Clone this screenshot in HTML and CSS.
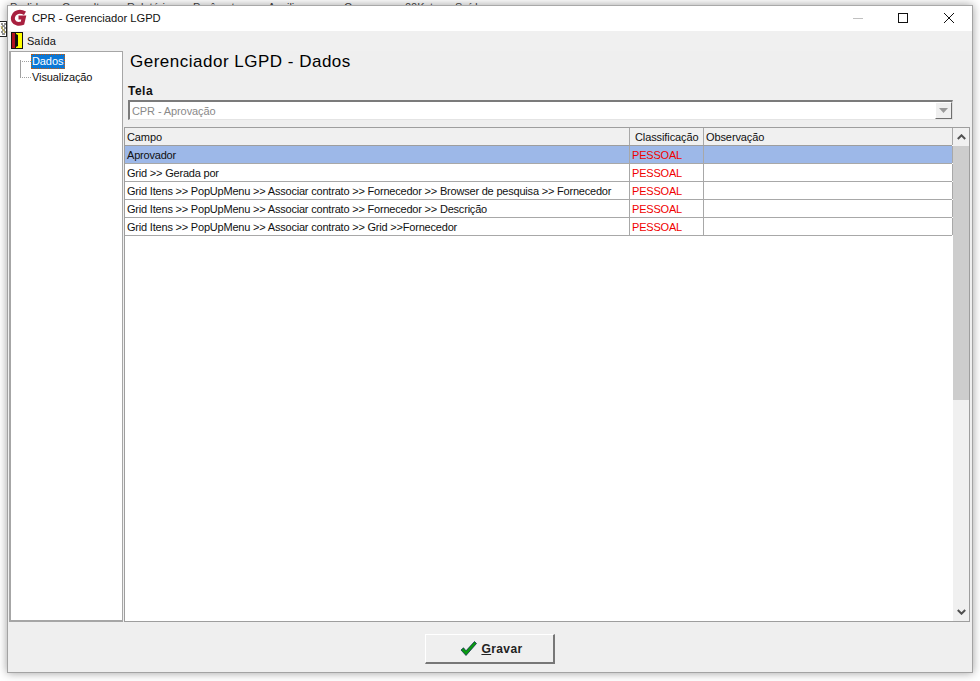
FILE: index.html
```html
<!DOCTYPE html>
<html lang="pt">
<head>
<meta charset="utf-8">
<title>CPR - Gerenciador LGPD</title>
<link rel="stylesheet" href="styles.css">
</head>
<body>
<nav class="behind-menu"><span class="m1">Pedidos</span><span class="m2">Consultas</span><span class="m3">Relatórios</span><span class="m4">Parâmetros</span><span class="m5">Auxiliares</span><span class="m6">Compras</span><span class="m7">00Kstore</span><span class="m8">Saída</span></nav>
<div class="window">
  <header class="titlebar">
    <svg class="logo" width="18" height="18" viewBox="0 0 18 18"><path d="M15 4.300C12 2.600 8.500 2.300 5.800 4 3 5.800 2.200 9.500 3.500 12c1.500 2.800 5.500 3.400 9 2.100l1.300-5.600H8.500" fill="none" stroke="#a8203f" stroke-width="4"/></svg>
    <span class="title">CPR - Gerenciador LGPD</span>
    <div class="controls">
      <span class="ctl min"></span>
      <span class="ctl max"></span>
      <svg class="ctl close" width="10" height="10" viewBox="0 0 10 10"><path d="M0 0l10 10M10 0L0 10" stroke="#111" fill="none"/></svg>
    </div>
  </header>
  <div class="menubar">
    <svg class="door" width="12" height="17" viewBox="0 0 12 17"><rect x="0" y="0" width="12" height="17" fill="#111"/><rect x="1" y="1" width="3" height="15" fill="#b01020"/><path d="M5 1h6v15H5z" fill="#ffff00"/><path d="M5 2l2 1v11l-2 1z" fill="#111"/></svg>
    <span class="menu-label">Saída</span>
  </div>
  <div class="content">
    <aside class="tree">
      <div class="tree-row"><span class="tree-branch first"></span><span class="node selected">Dados</span></div>
      <div class="tree-row"><span class="tree-branch"></span><span class="node">Visualização</span></div>
    </aside>
    <main class="main">
      <h1 class="heading">Gerenciador LGPD - Dados</h1>
      <label class="field-label">Tela</label>
      <div class="combo">
        <span class="combo-text">CPR - Aprovação</span>
        <span class="combo-btn"><svg width="9" height="5" viewBox="0 0 9 5"><path d="M0 0h9L4.500 5z" fill="#9a9a9a"/></svg></span>
      </div>
      <div class="grid-panel">
        <div class="grid">
          <div class="row head"><div class="c1">Campo</div><div class="c2">Classificação</div><div class="c3">Observação</div></div>
          <div class="row active"><div class="c1">Aprovador</div><div class="c2 red">PESSOAL</div><div class="c3"></div></div>
          <div class="row"><div class="c1">Grid &gt;&gt; Gerada por</div><div class="c2 red">PESSOAL</div><div class="c3"></div></div>
          <div class="row"><div class="c1">Grid Itens &gt;&gt; PopUpMenu &gt;&gt; Associar contrato &gt;&gt; Fornecedor &gt;&gt; Browser de pesquisa &gt;&gt; Fornecedor</div><div class="c2 red">PESSOAL</div><div class="c3"></div></div>
          <div class="row"><div class="c1">Grid Itens &gt;&gt; PopUpMenu &gt;&gt; Associar contrato &gt;&gt; Fornecedor &gt;&gt; Descrição</div><div class="c2 red">PESSOAL</div><div class="c3"></div></div>
          <div class="row"><div class="c1">Grid Itens &gt;&gt; PopUpMenu &gt;&gt; Associar contrato &gt;&gt; Grid &gt;&gt;Fornecedor</div><div class="c2 red">PESSOAL</div><div class="c3"></div></div>
        </div>
        <div class="scrollbar">
          <div class="arrow"><svg width="9" height="6" viewBox="0 0 9 6"><path d="M.800 5L4.500 1.300 8.200 5" stroke="#505050" stroke-width="2" fill="none"/></svg></div>
          <div class="thumb"></div>
          <div class="track"></div>
          <div class="arrow"><svg width="9" height="6" viewBox="0 0 9 6"><path d="M.800 1L4.500 4.700 8.200 1" stroke="#505050" stroke-width="2" fill="none"/></svg></div>
        </div>
      </div>
    </main>
  </div>
  <footer class="footer">
    <button class="btn" type="button">
      <svg width="17" height="15" viewBox="0 0 17 15"><path d="M1 9l2.500-2.200 2.500 3L14.500 .500 16.500 2.500 6 14.500z" fill="#0a9a10" stroke="#06204a" stroke-width=".7"/></svg>
      <span class="btn-label"><u>G</u>ravar</span>
    </button>
  </footer>
</div>
<svg class="desk-icon" width="7" height="16" viewBox="0 0 7 16"><rect x="-1" y=".5" width="7.500" height="15" fill="#fff" stroke="#222"/><path d="M1 3h2M4 3h2M2 5h3M1 7h2M4 7h2M2 9h3M1 11h2M4 11h2M2 13h3" stroke="#222" fill="none"/><path d="M1 5l4 7" stroke="#c9b44a"/></svg>
</body>
</html>
```
FILE: styles.css
```css
* { box-sizing: border-box; }
html, body { margin: 0; padding: 0; }
body {
  width: 980px;
  height: 681px;
  overflow: hidden;
  background: #fff;
  font-family: "Liberation Sans", Arial, sans-serif;
  font-size: 11px;
  color: #111;
  position: relative;
}
.behind-menu {
  position: absolute;
  top: 0; left: 10px;
  height: 5px;
  overflow: hidden;
  display: flex;
  line-height: 11px;
  color: #444;
  white-space: nowrap;
}
.behind-menu span { display: block; margin-top: 2px; }
.m1 { width: 52px; }
.m2 { width: 65px; }
.m3 { width: 66px; }
.m4 { width: 75px; }
.m5 { width: 76px; }
.m6 { width: 61px; }
.m7 { width: 50px; }
.desk-icon { position: absolute; left: 0; top: 21px; }
.window {
  position: absolute;
  left: 7px; top: 5px;
  width: 966px; height: 668px;
  border: 1px solid #a3a3a3;
  border-top-color: #a9a9a9;
  background: #efefef;
  box-shadow: 0 0 9px rgba(0,0,0,.38);
  display: flex;
  flex-direction: column;
}
.titlebar {
  height: 25px;
  flex: none;
  background: #fff;
  display: flex;
  align-items: center;
  padding: 0 0 1px 2px;
}
.logo { flex: none; }
.title {
  margin-left: 4px;
  font-size: 11.2px;
  color: #111;
}
.controls {
  margin-left: auto;
  display: flex;
  align-items: center;
  height: 100%;
  padding-right: 18px;
}
.ctl { display: block; flex: none; }
.ctl.min { width: 10px; height: 1px; background: #c0c0c0; }
.ctl.max { width: 10px; height: 10px; border: 1px solid #111; margin-left: 35px; }
.ctl.close { margin-left: 36px; }
.menubar {
  height: 20px;
  flex: none;
  display: flex;
  align-items: center;
  padding-left: 3px;
  background: #f0f0f0;
}
.door { display: block; margin-top: -1px; }
.menu-label { margin-left: 4px; font-size: 11px; color: #111; }
.content {
  height: 571px;
  flex: none;
  display: flex;
  padding: 0 1px 0 1px;
  gap: 1px;
}
.tree {
  width: 114px;
  height: 571px;
  background: #fff;
  border: 1px solid #a6a6a6;
  border-left-width: 2px;
  border-bottom-width: 2px;
  padding-top: 1px;
  flex: none;
}
.tree-row {
  height: 16px;
  display: flex;
  align-items: center;
  position: relative;
  padding-left: 9px;
}
.tree-branch {
  width: 11px;
  height: 0;
  border-top: 1px dotted #a0a0a0;
  flex: none;
}
.tree-branch::before {
  content: "";
  position: absolute;
  left: 9px;
  top: 7px;
  height: 16px;
  border-left: 1px dotted #a0a0a0;
}
.tree-row:last-child .tree-branch::before { top: -8px; }
.node { padding: 0 2px 0 1px; line-height: 15px; font-size: 11px; letter-spacing: -.1px; }
.node.selected {
  background: #0a78d7;
  color: #fff;
  outline: 1px dotted #d05a00;
  outline-offset: -1px;
}
.main {
  flex: 1;
  min-width: 0;
  display: flex;
  flex-direction: column;
  height: 571px;
}
.heading {
  margin: 0 0 0 6px;
  padding-top: 1px;
  height: 31px;
  font-size: 17px;
  line-height: 19px;
  font-weight: normal;
  letter-spacing: .5px;
  color: #000;
}
.field-label {
  display: block;
  margin: 2px 0 0 4px;
  height: 16px;
  line-height: 15px;
  font-size: 12px;
  font-weight: bold;
  letter-spacing: .5px;
}
.combo {
  margin-left: 4px;
  width: 825px;
  height: 20px;
  flex: none;
  background: #fff;
  border-top: 2px solid #7b7b7b;
  border-left: 2px solid #7b7b7b;
  border-right: 1px solid #dedede;
  border-bottom: 1px solid #e4e4e4;
  display: flex;
  align-items: stretch;
}
.combo-text { flex: 1; color: #8a8a8a; padding-left: 2px; line-height: 19px; letter-spacing: -.1px; }
.combo-btn {
  width: 17px;
  background: #efefef;
  border: 1px solid #fff;
  border-right-color: #6f6f6f;
  border-bottom-color: #6f6f6f;
  display: flex;
  align-items: center;
  justify-content: center;
}
.grid-panel {
  margin-top: 7px;
  flex: 1;
  min-height: 0;
  display: flex;
  border: 1px solid #9e9e9e;
  background: #fff;
  margin-right: 1px;
}
.grid { flex: 1; min-width: 0; }
.row {
  display: grid;
  grid-template-columns: 505px 74px 249px;
  height: 18px;
  background: #fff;
  line-height: 19px;
  white-space: nowrap;
  border-bottom: 1px solid #a8a8a8;
  letter-spacing: -.2px;
}
.row > div {
  padding-left: 2px;
  border-right: 1px solid #a8a8a8;
  overflow: hidden;
}
.row.head { background: #f0f0f0; border-bottom-color: #9e9e9e; letter-spacing: -.1px; }
.row.head .c2 { padding-left: 5px; }
.row.active { background: #9db8e8; }
.row .red { color: #f00000; letter-spacing: -.2px; padding-left: 2px; }
.scrollbar {
  width: 16px;
  flex: none;
  margin-left: 1px;
  background: #f0f0f0;
  display: flex;
  flex-direction: column;
}
.arrow {
  height: 18px;
  flex: none;
  display: flex;
  align-items: center;
  justify-content: center;
}
.thumb { height: 254px; background: #cdcdcd; flex: none; }
.track { flex: 1; }
.footer {
  flex: 1;
  display: flex;
  justify-content: center;
  align-items: flex-start;
  padding-top: 12px;
}
.btn {
  width: 130px;
  height: 30px;
  background: #efefef;
  border: 1px solid #fff;
  border-right: 2px solid #777;
  border-bottom: 2px solid #777;
  display: flex;
  align-items: center;
  justify-content: center;
  gap: 4px;
  padding: 0 0 0 4px;
  font: inherit;
  cursor: default;
}
.btn-label { font-size: 12px; font-weight: bold; letter-spacing: .4px; color: #222; }
```
